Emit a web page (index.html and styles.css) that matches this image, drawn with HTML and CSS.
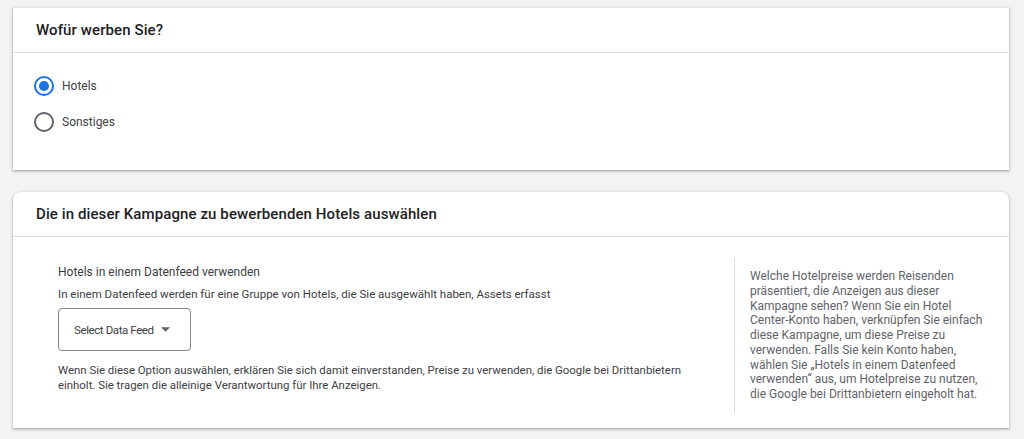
FILE: index.html
```html
<!DOCTYPE html>
<html lang="de">
<head>
<meta charset="utf-8">
<title>Kampagne</title>
<link rel="stylesheet" href="styles.css">
</head>
<body>
<div class="page">
  <section class="card card-first">
    <header class="card-header"><h2 class="card-title">Wofür werben Sie?</h2></header>
    <div class="card-body radios">
      <label class="radio-row">
        <span class="radio checked"><span class="dot"></span></span>
        <span class="radio-label">Hotels</span>
      </label>
      <label class="radio-row">
        <span class="radio"></span>
        <span class="radio-label">Sonstiges</span>
      </label>
    </div>
  </section>

  <section class="card card-second">
    <header class="card-header"><h2 class="card-title">Die in dieser Kampagne zu bewerbenden Hotels auswählen</h2></header>
    <div class="card-body split">
      <div class="main-col">
        <div class="field-title">Hotels in einem Datenfeed verwenden</div>
        <div class="field-desc">In einem Datenfeed werden für eine Gruppe von Hotels, die Sie ausgewählt haben, Assets erfasst</div>
        <button class="select-btn" type="button">
          <span>Select Data Feed</span>
          <svg class="caret" width="9" height="5" viewBox="0 0 10 5"><path d="M0 0 L10 0 L5 5 Z" fill="#5f6368"/></svg>
        </button>
        <p class="note">Wenn Sie diese Option auswählen, erklären Sie sich damit einverstanden, Preise zu verwenden, die Google bei Drittanbietern einholt. Sie tragen die alleinige Verantwortung für Ihre Anzeigen.</p>
      </div>
      <aside class="side-col">
        <p class="side-text">Welche Hotelpreise werden Reisenden präsentiert, die Anzeigen aus dieser Kampagne sehen? Wenn Sie ein Hotel Center-Konto haben, verknüpfen Sie einfach diese Kampagne, um diese Preise zu verwenden. Falls Sie kein Konto haben, wählen Sie „Hotels in einem Datenfeed verwenden“ aus, um Hotelpreise zu nutzen, die Google bei Drittanbietern eingeholt hat.</p>
      </aside>
    </div>
  </section>
</div>
</body>
</html>
```

FILE: styles.css
```css
* { box-sizing: border-box; }
html, body { margin: 0; padding: 0; }
body {
  background: #f1f3f4;
  font-family: Roboto, "Liberation Sans", Arial, sans-serif;
  color: #3c4043;
  width: 1024px;
  height: 439px;
  overflow: hidden;
}
.page {
  padding: 8px 15px 0 13px;
  display: flex;
  flex-direction: column;
  gap: 22px;
}
.card {
  background: #fff;
  box-shadow: 0 1px 2px rgba(60,64,67,.3), 0 1px 3px 1px rgba(60,64,67,.15);
}
.card-second { border-radius: 8px 8px 0 0; }
.card-header {
  height: 45px;
  border-bottom: 1px solid #dadce0;
  display: flex;
  align-items: center;
  padding-left: 23px;
}
.card-title {
  margin: 0;
  font-size: 15px;
  font-weight: 500;
  color: #202124;
  letter-spacing: 0.1px;
}
.radios {
  height: 117px;
  padding: 23px 0 0 21px;
  display: flex;
  flex-direction: column;
  gap: 16px;
}
.radio-row {
  display: flex;
  align-items: center;
  gap: 8px;
  height: 20px;
}
.radio {
  width: 20px;
  height: 20px;
  border: 2px solid #5f6368;
  border-radius: 50%;
  display: flex;
  align-items: center;
  justify-content: center;
}
.radio.checked { border-color: #1a73e8; }
.dot {
  width: 10px;
  height: 10px;
  border-radius: 50%;
  background: #1a73e8;
}
.radio-label {
  font-size: 12px;
  color: #3c4043;
}
.split {
  display: flex;
  padding: 21px 0 15px 45px;
  height: 191px;
}
.main-col {
  width: 676px;
  padding-top: 6px;
}
.field-title {
  font-size: 12px;
  color: #3c4043;
  line-height: 16px;
}
.field-desc {
  font-size: 11.5px;
  color: #3c4043;
  line-height: 16px;
  margin-top: 6px;
}
.select-btn {
  margin-top: 6px;
  width: 133px;
  height: 43px;
  border: 1px solid #80868b;
  border-radius: 4px;
  background: #fff;
  display: flex;
  align-items: center;
  gap: 7px;
  padding: 0 0 0 15px;
  font-family: inherit;
  font-size: 11.5px;
  letter-spacing: -0.4px;
  color: #3c4043;
}
.caret { display: block; }
.note {
  margin: 12px 0 0;
  font-size: 11.4px;
  line-height: 14.5px;
  color: #3c4043;
  width: 645px;
}
.side-col {
  border-left: 1px solid #dadce0;
  padding: 11px 0 0 15px;
  width: 255px;
}
.side-text {
  margin: 0;
  font-size: 12px;
  line-height: 14.75px;
  color: #5f6368;
}
```
